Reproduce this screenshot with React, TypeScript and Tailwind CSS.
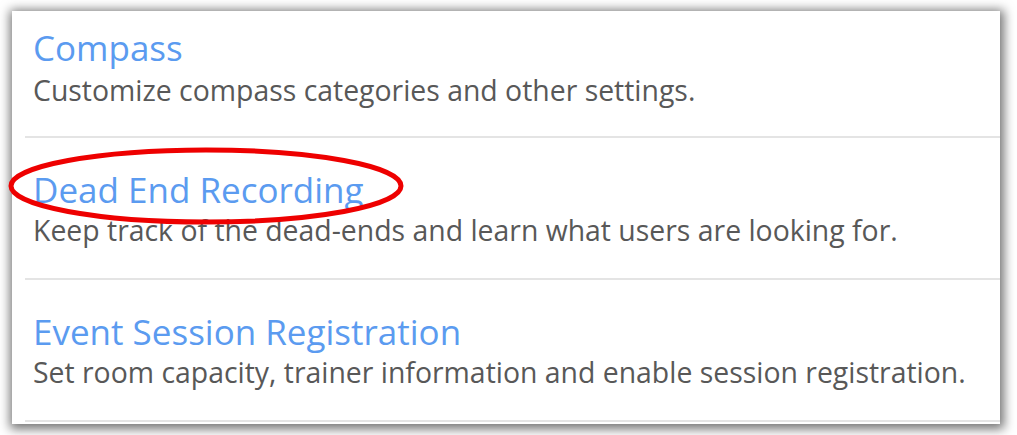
const items = [
  { title: "Compass", desc: "Customize compass categories and other settings." },
  { title: "Dead End Recording", desc: "Keep track of the dead-ends and learn what users are looking for." },
  { title: "Event Session Registration", desc: "Set room capacity, trainer information and enable session registration." },
];

export default function App() {
  return (
    <div className="h-[435px] w-[1017px] overflow-hidden bg-white pl-[12px] pt-[11px] font-['Open_Sans',sans-serif]">
      <div className="relative h-[413px] w-[988px] bg-white pl-[13px] shadow-[1px_2px_10px_3px_rgba(0,0,0,0.55)]">
        <ul>
          {items.map((item, i) => (
            <li
              key={item.title}
              className={`border-b-2 border-[#e4e4e4] pl-[8px] ${i === 0 ? "pt-[17px] pb-[27px]" : "pt-[32px] pb-[29px]"}`}
            >
              <a className="block text-[35px] leading-[40px] text-[#5b9bf0]">{item.title}</a>
              <p className={`text-[28.4px] leading-[38px] text-[#585858] ${i === 0 ? "mt-[3px]" : "mt-[1px]"}`}>{item.desc}</p>
            </li>
          ))}
        </ul>
        <svg className="absolute left-[-4px] top-[136px] pointer-events-none" width="400" height="80" viewBox="0 0 400 80">
          <ellipse cx="198" cy="39" rx="195" ry="36" fill="none" stroke="#ee0000" strokeWidth="5" />
        </svg>
      </div>
    </div>
  );
}
